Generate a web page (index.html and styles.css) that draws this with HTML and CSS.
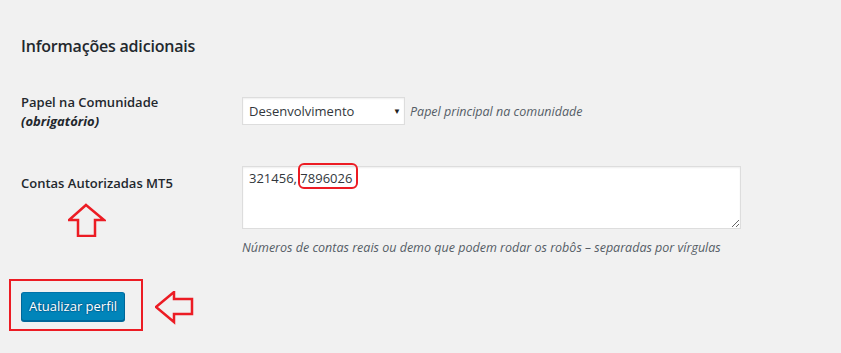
FILE: index.html
```
<!DOCTYPE html>
<html lang="pt">
<head>
<meta charset="utf-8">
<link rel="stylesheet" href="styles.css">
</head>
<body>
<div class="page">
  <h2 class="title">Informações adicionais</h2>
  <div class="form">
    <div class="row row-select">
      <div class="label">Papel na Comunidade<br><em class="req">(obrigatório)</em></div>
      <div class="field inline">
        <span class="select-wrap">
          <select class="select"><option>Desenvolvimento</option></select>
        </span>
        <span class="desc">Papel principal na comunidade</span>
      </div>
    </div>
    <div class="row row-area">
      <div class="label label-area">
        Contas Autorizadas MT5
        <svg class="arrow-up" width="38" height="34" viewBox="0 0 38 34"><path d="M17 1 L35 16 L26 16 L26 32 L9 32 L9 16 L0 16 Z" transform="translate(1 1)" fill="none" stroke="#ec1c24" stroke-width="2.5" stroke-linejoin="miter"/></svg>
      </div>
      <div class="field">
        <div class="area-wrap">
          <textarea class="area">321456, 7896026</textarea>
          <span class="mark"></span>
        </div>
        <p class="hint">Números de contas reais ou demo que podem rodar os robôs – separadas por vírgulas</p>
      </div>
    </div>
  </div>
  <div class="submit">
    <div class="btn-frame">
      <button class="btn">Atualizar perfil</button>
    </div>
    <svg class="arrow-left" width="40" height="34" viewBox="0 0 40 34"><path d="M1 16 L19 1 L19 8 L37 8 L37 23 L19 23 L19 31 Z" fill="none" stroke="#ec1c24" stroke-width="2.5"/></svg>
  </div>
</div>
</body>
</html>
```
FILE: styles.css
```
html, body {
  margin: 0;
  padding: 0;
  background: #f1f1f1;
}
body {
  font-family: "Open Sans", "Noto Sans", sans-serif;
  color: #23282d;
  font-size: 13px;
}
.page {
  padding: 0 0 0 21px;
  width: 720px;
}
.title {
  margin: 0;
  padding-top: 34px;
  font-size: 16px;
  font-weight: 600;
  line-height: 24px;
  letter-spacing: -0.2px;
}
.form {
  margin-top: 34px;
}
.row {
  display: grid;
  grid-template-columns: 221px 1fr;
}
.label {
  font-size: 13px;
  font-weight: 600;
  line-height: 19px;
  letter-spacing: 0;
}
.req {
  font-style: italic;
  font-weight: 700;
}
.inline {
  display: flex;
  align-items: center;
  gap: 5px;
  align-self: start;
  margin-top: 5px;
}
.row-select .label {
  margin-top: 1px;
}
.select-wrap {
  position: relative;
  display: inline-block;
}
.select-wrap::after {
  content: "\25BC";
  position: absolute;
  right: 4px;
  top: 8px;
  font-size: 8px;
  color: #222;
  pointer-events: none;
}
.select {
  appearance: none;
  -webkit-appearance: none;
  width: 163px;
  height: 28px;
  border: 1px solid #ddd;
  background: #fff;
  box-shadow: 0 1px 2px rgba(0,0,0,0.07) inset;
  font-family: inherit;
  font-size: 13px;
  color: #32373c;
  padding: 0 6px;
  border-radius: 0;
  margin: 0;
  display: block;
}
.desc {
  font-style: italic;
  color: #555d66;
  font-size: 12.5px;
  letter-spacing: 0;
}
.row-area {
  margin-top: 35px;
}
.label-area {
  padding-top: 8px;
  display: flex;
  flex-direction: column;
}
.arrow-up {
  margin: 10px 0 0 47px;
}
.area-wrap {
  position: relative;
  width: 499px;
}
.area {
  display: block;
  box-sizing: border-box;
  width: 499px;
  height: 63px;
  border: 1px solid #ddd;
  background: #fff;
  box-shadow: 0 1px 2px rgba(0,0,0,0.07) inset;
  font-family: inherit;
  font-size: 13px;
  color: #32373c;
  padding: 2px 6px;
  margin: 0;
  border-radius: 0;
  line-height: 18px;
}
.mark {
  position: absolute;
  left: 56px;
  top: -3px;
  width: 56px;
  height: 22px;
  border: 2px solid #ec1c24;
  border-radius: 6px;
}
.hint {
  margin: 10px 0 0;
  font-style: italic;
  color: #555d66;
  font-size: 12.5px;
  line-height: 18px;
  letter-spacing: 0;
}
.submit {
  margin-top: 22px;
  margin-left: -12px;
  display: flex;
  align-items: flex-start;
  gap: 12px;
}
.btn-frame {
  border: 2px solid #ec1c24;
  padding: 11px 16px 8px 10px;
}
.btn {
  display: block;
  height: 29px;
  padding: 0 7px 2px;
  background: #0085ba;
  border: 1px solid #0073aa;
  border-color: #0073aa #006799 #006799;
  box-shadow: 0 1px 0 #006799;
  border-radius: 3px;
  color: #fff;
  font-family: inherit;
  font-size: 13px;
  text-shadow: 0 -1px 1px #006799, 1px 0 1px #006799, 0 1px 1px #006799, -1px 0 1px #006799;
}
.arrow-left {
  margin-top: 12px;
}
```
